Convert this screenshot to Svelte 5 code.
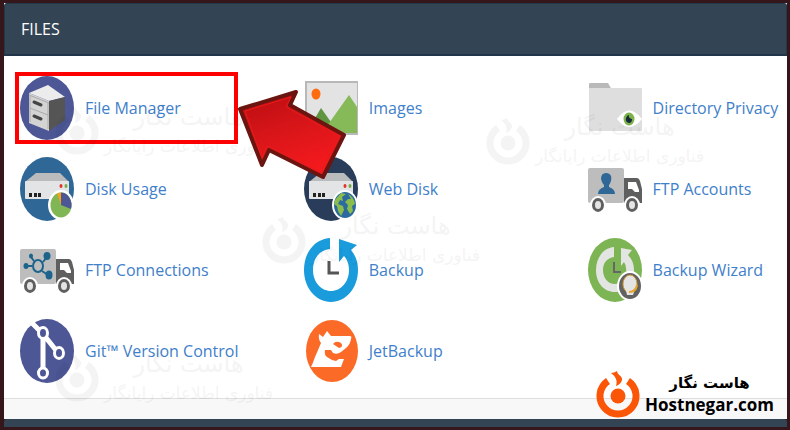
<script lang="ts">
  // "Files" panel of the hosting dashboard, with File Manager pointed out.
  type Tool = { label: string; icon: string; marked?: boolean };

  const tools: Tool[] = [
    { label: 'File Manager', icon: 'cabinet', marked: true },
    { label: 'Images', icon: 'images' },
    { label: 'Directory Privacy', icon: 'folder' },
    { label: 'Disk Usage', icon: 'usage' },
    { label: 'Web Disk', icon: 'webdisk' },
    { label: 'FTP Accounts', icon: 'accounts' },
    { label: 'FTP Connections', icon: 'connections' },
    { label: 'Backup', icon: 'backup' },
    { label: 'Backup Wizard', icon: 'wizard' },
    { label: 'Git™ Version Control', icon: 'git' },
    { label: 'JetBackup', icon: 'jet' }
  ];
</script>

{#snippet disk()}
  <path d="M16 16H40L49 25H5Z" fill="#b9bbbd" />
  <rect x="5" y="24" width="44" height="18" rx="1" fill="#e3e4e5" />
  <path d="M9 36h3v4H9zM14 36h3v4h-3zM18 36h3v4h-3z" fill="#222" />
  <ellipse cx="41" cy="29" rx="1.5" ry="2" fill="#e0352b" />
  <ellipse cx="46" cy="29" rx="1.5" ry="2" fill="#74ac48" />
  <ellipse cx="41" cy="48" rx="13" ry="15" fill="#fff" />
{/snippet}

{#snippet truck()}
  <rect x="0" y="11" width="36" height="35" rx="2" fill="#bdbdbd" />
  <path d="M36 21H49Q51 21 52 24L54 32V46H36Z" fill="#5f5f5f" />
  <path d="M40 25H48L51 33V35H47L44 32H40Z" fill="#fff" />
  <ellipse cx="10" cy="48" rx="8" ry="9" fill="#fff" />
  <ellipse cx="44" cy="48" rx="8" ry="9" fill="#fff" />
  <ellipse cx="10" cy="48" rx="4.5" ry="5.5" fill="#e4e4e4" stroke="#5f5f5f" stroke-width="3" />
  <ellipse cx="44" cy="48" rx="4.5" ry="5.5" fill="#e4e4e4" stroke="#5f5f5f" stroke-width="3" />
{/snippet}

{#snippet logo()}
  <svg class="logo" viewBox="0 0 44 48" aria-hidden="true">
    <path d="M12 11A18 18 0 1 0 32 11" fill="none" stroke="currentColor" stroke-width="7" />
    <circle cx="22" cy="26" r="7.5" fill="currentColor" />
    <path d="M15 3Q18 3 21 1C21 5 27 6 26 10Q25 14 20 16C22 10 19 6 15 3Z" fill="currentColor" />
  </svg>
{/snippet}

{#snippet toolIcon(name: string)}
  <svg class="icon" viewBox="0 0 54 64" aria-hidden="true">
    {#if name === 'cabinet'}
      <ellipse cx="27" cy="32" rx="27" ry="32" fill="#4d5796" />
      <path d="M9 17L28 9L45 21L29 25Z" fill="#ececec" />
      <path d="M9 17L29 25V55L9 47Z" fill="#d3d3d3" />
      <path d="M29 25L45 21V44L29 55Z" fill="#555" />
      <path d="M9 19L29 27M10 32L28 39M10 20V46M28 27V53" stroke="#aaa" stroke-width="1" />
      <path d="M14 26L21 29M14 40L21 43" stroke="#444" stroke-width="3" stroke-linecap="round" />
    {:else if name === 'images'}
      <rect x="2" y="6" width="52" height="52" fill="#e3e3e3" stroke="#b8b8b8" stroke-width="2" />
      <ellipse cx="12" cy="18" rx="4.5" ry="5.5" fill="#ff6c0f" />
      <path d="M3 56L17 32L34 56Z" fill="#5f9440" />
      <path d="M18 57L45 19L53 31V57Z" fill="#86b957" />
    {:else if name === 'folder'}
      <path d="M1 15V8Q1 7 3 7H20L24 14Z" fill="#b9b9b9" />
      <rect x="1" y="12" width="53" height="43" rx="1" fill="#dedede" />
      <path d="M29 43Q41 26 54 43Q41 59 29 43Z" fill="#fff" />
      <ellipse cx="41" cy="43" rx="5.5" ry="6.5" fill="#7db24b" />
      <path d="M41 39Q40 42 44 43Q44 47 41 47Q37 46 38 42Q39 39 41 39Z" fill="#17273c" />
    {:else if name === 'usage'}
      <ellipse cx="27" cy="32" rx="27" ry="32" fill="#2f6896" />
      {@render disk()}
      <ellipse cx="41" cy="48" rx="10.5" ry="12.5" fill="#80b653" />
      <path d="M41 48V35.5A10.5 12.5 0 0 1 51 52Z" fill="#4d5796" />
      <path d="M41 48L37 36.5Q39 35.5 41 35.5Z" fill="#f6a01c" />
    {:else if name === 'webdisk'}
      <ellipse cx="27" cy="32" rx="27" ry="32" fill="#293d5b" />
      {@render disk()}
      <ellipse cx="41" cy="48" rx="11" ry="13" fill="#2d6a9f" />
      <path d="M31 43L37 36L42 37L38 40L39 44L36 43L34 47L39 49L40 53L37 59L34 54L33 49L30 47ZM44 37Q50 40 51 47L48 49L49 54L46 57L43 52L44 48L41 45L44 42L47 42Z" fill="#8abd4c" />
    {:else if name === 'accounts'}
      {@render truck()}
      <path d="M18 16C23 16 24 20 23 24Q22 27 21 28V30Q27 32 27 37H10Q10 32 16 30V28Q14 26 13 22Q13 16 18 16Z" fill="#2f6896" />
    {:else if name === 'connections'}
      {@render truck()}
      <path d="M5 28H12M23 24L27 19M22 33L28 37M14 23L11 19" stroke="#1d648c" stroke-width="2" />
      <ellipse cx="18" cy="28" rx="5" ry="6" fill="none" stroke="#1d648c" stroke-width="2" />
      <g fill="#1d648c">
        <ellipse cx="6" cy="28" rx="2.5" ry="3" />
        <ellipse cx="11" cy="18" rx="2" ry="2.5" />
        <ellipse cx="27" cy="18" rx="3.5" ry="4" />
        <ellipse cx="29" cy="37" rx="3.5" ry="4.5" />
      </g>
    {:else if name === 'backup'}
      <path d="M26 0V11C15 12 9 21 9 32C9 44 17 53 27 53C37 53 45 44 45 32C45 26 43 21 40 18L35 24V1L53 7L47 12C52 18 54 24 54 32C54 50 42 64 27 64C12 64 0 50 0 32C0 14 11 1 26 0Z" fill="#199bdc" />
      <path d="M25 23V35H35" fill="none" stroke="#555" stroke-width="3" />
    {:else if name === 'wizard'}
      <ellipse cx="27" cy="32" rx="27" ry="32" fill="#7db454" />
      <path d="M26 9V19C19 20 15 25 15 32C15 40 20 46 27 46C33 46 37 41 38 35Q39 28 36 24L33 28V10L44 12L40 17C44 21 46 26 46 32C46 45 38 54 27 54C16 54 8 45 8 32C8 20 15 10 26 9Z" fill="#e3e5e2" />
      <path d="M26 24V34H33" fill="none" stroke="#666" stroke-width="2" />
      <ellipse cx="42" cy="48" rx="13" ry="15" fill="#fff" />
      <ellipse cx="42" cy="48" rx="11" ry="13" fill="#626262" />
      <ellipse cx="42" cy="46" rx="7" ry="9" fill="#e4e4e4" stroke="#d59b31" stroke-width="1" />
      <path d="M37 48L39 57H45L48 48Z" fill="#e4e4e4" />
      <path d="M49 47Q48 54 41 54" fill="none" stroke="#e6a52a" stroke-width="2" />
    {:else if name === 'git'}
      <ellipse cx="27" cy="32" rx="27" ry="32" fill="#4d5796" />
      <path d="M12 4L23 15L39 35M23 15V54" fill="none" stroke="#fff" stroke-width="5" />
      <g fill="#4d5796" stroke="#fff" stroke-width="3">
        <ellipse cx="23" cy="14" rx="4.5" ry="5.5" />
        <ellipse cx="39" cy="34" rx="4.5" ry="5.5" />
        <ellipse cx="23" cy="54" rx="4.5" ry="5" />
      </g>
    {:else}
      <ellipse cx="28" cy="32" rx="26" ry="31" fill="#fb6b27" />
      <path d="M15 15L19 18L23 12L27 17H46Q48 17 47 20Q46 26 42 29L37 33Q33 36 29 34L27 31H21Q20 36 23 38Q27 41 32 42L35 40H40L37 48H7Q9 44 11 38L17 24Q14 20 15 15Z" fill="#fff" />
      <path d="M29 25Q32 21 37 24Q40 28 35 29L32 27Z" fill="#fb6b27" />
    {/if}
  </svg>
{/snippet}

{#snippet watermark(place: string)}
  <div class="watermark {place}" dir="ltr" aria-hidden="true">
    {@render logo()}
    <div class="mark-text" lang="fa">
      <span class="mark-name">هاست نگار</span>
      <span class="mark-line">فناوری اطلاعات رایانگار</span>
    </div>
  </div>
{/snippet}

<main class="frame">
  <section class="panel">
    <header class="panel-head">
      <h2>FILES</h2>
    </header>
    <ul class="tools">
      {#each tools as tool}
        <li class:marked={tool.marked}>
          <a href="#{tool.icon}">
            {@render toolIcon(tool.icon)}
            <span>{tool.label}</span>
          </a>
        </li>
      {/each}
    </ul>
  </section>
  <div class="gap"></div>
  <div class="next-head"></div>

  {@render watermark('first')}
  {@render watermark('second')}
  {@render watermark('third')}
  {@render watermark('fourth')}

  <svg class="arrow" viewBox="0 0 112 92" aria-hidden="true">
    <defs>
      <linearGradient id="arrow-fill" x1="0" y1="0" x2="0.4" y2="1">
        <stop offset="0" stop-color="#b80c10" />
        <stop offset="0.5" stop-color="#d61519" />
        <stop offset="1" stop-color="#f3191d" />
      </linearGradient>
    </defs>
    <path d="M3 21L59 4L53 17L107 47L86 89L32 62L25 77Z" fill="url(#arrow-fill)" stroke="#6b1510" stroke-width="4" stroke-linejoin="round" />
    <path d="M8 23L54 9L49 19L102 48L84 84L30 58L25 70Z" fill="none" stroke="#e81b1b" stroke-width="1" />
  </svg>

  <div class="brand">
    {@render logo()}
    <div class="brand-text">
      <span lang="fa" dir="rtl">هاست نگار</span>
      <strong>Hostnegar.com</strong>
    </div>
  </div>
</main>

<style>
  :global(body) {
    margin: 0;
    background: #35171b;
  }
  .frame {
    position: relative;
    padding: 3px 3px 3px 4px;
    background: #35171b;
    font-family: 'Open Sans', 'Noto Sans', sans-serif;
    overflow: hidden;
  }
  .panel {
    background: #fff;
    border-bottom: 1px solid #dedede;
  }
  .panel-head {
    display: flex;
    align-items: center;
    box-sizing: border-box;
    height: 53px;
    padding: 0 16px;
    background: #334454;
    border: 1px solid #24384b;
    border-bottom: 2px solid #21354a;
    border-radius: 3px 3px 0 0;
  }
  h2 {
    margin: 0;
    color: #fff;
    font-size: 16px;
    font-weight: 400;
    line-height: 24px;
  }
  .tools {
    display: grid;
    grid-template-columns: 37% 37% 1fr;
    row-gap: 17px;
    margin: 0;
    padding: 20px 0 15px 16px;
    list-style: none;
  }
  li {
    position: relative;
  }
  .marked::after {
    content: '';
    position: absolute;
    inset: -4px 66px -4px -5px;
    border: 4px solid #fe0000;
    pointer-events: none;
  }
  a {
    display: flex;
    align-items: center;
    gap: 11px;
    color: #3f80ca;
    font-size: 16px;
    line-height: 24px;
    text-decoration: none;
    white-space: nowrap;
  }
  a:hover span {
    text-decoration: underline;
  }
  .icon {
    flex-shrink: 0;
    width: 54px;
    height: 64px;
  }
  .gap {
    height: 20px;
    background: #f8f8f9;
  }
  .next-head {
    height: 8px;
    background: #334454;
    border-radius: 3px 3px 0 0;
  }

  .logo {
    flex-shrink: 0;
    width: 44px;
    height: 48px;
  }
  .watermark {
    position: absolute;
    display: flex;
    align-items: center;
    gap: 5px;
    color: #000;
    opacity: 0.04;
    pointer-events: none;
  }
  .first {
    left: 55px;
    top: 102px;
  }
  .second {
    left: 486px;
    top: 112px;
  }
  .third {
    left: 262px;
    top: 211px;
  }
  .fourth {
    left: 55px;
    top: 349px;
  }
  .mark-text {
    display: flex;
    flex-direction: column;
    align-items: center;
    font-family: 'DejaVu Sans', sans-serif;
    white-space: nowrap;
  }
  .mark-name {
    font-size: 24px;
    line-height: 30px;
  }
  .mark-line {
    font-size: 17px;
    line-height: 28px;
  }

  .arrow {
    position: absolute;
    left: 237px;
    top: 88px;
    width: 112px;
    height: 92px;
  }
  .brand {
    position: absolute;
    right: 16px;
    bottom: 12px;
    display: flex;
    align-items: center;
    gap: 5px;
    color: #fb5607;
  }
  .brand-text {
    display: flex;
    flex-direction: column;
    align-items: center;
    color: #000;
    font-size: 17px;
    line-height: 22px;
  }
  .brand-text span {
    font-family: 'DejaVu Sans', sans-serif;
    font-weight: 700;
    font-size: 15px;
  }
  .brand-text strong {
    font-weight: 700;
  }
</style>
